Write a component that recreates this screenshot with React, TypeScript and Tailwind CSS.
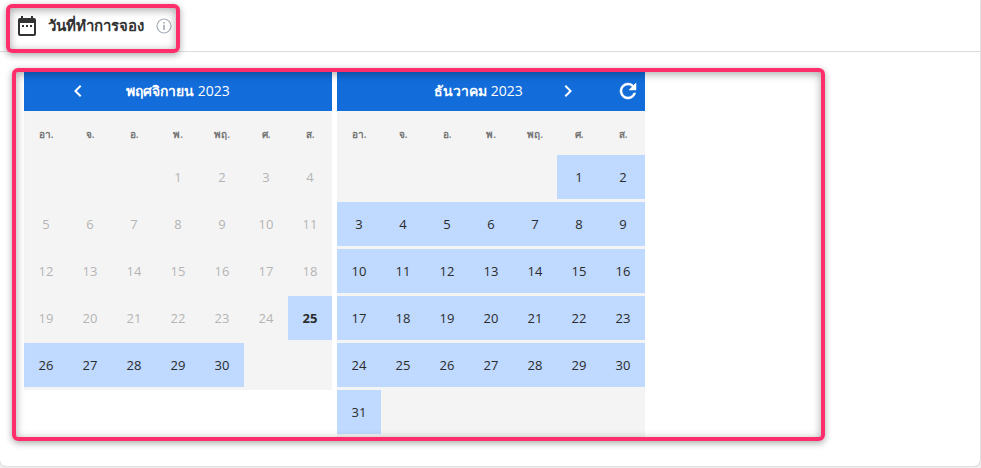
import { MdChevronLeft, MdChevronRight } from 'react-icons/md'

const WEEKDAYS = ['อา.', 'จ.', 'อ.', 'พ.', 'พฤ.', 'ศ.', 'ส.']

const TODAY = 25

// split a month into rows of seven, null for the blank cells
function getWeeks(firstWeekday: number, dayCount: number) {
  const cells: (number | null)[] = Array(firstWeekday).fill(null)
  for (let day = 1; day <= dayCount; day++) cells.push(day)
  while (cells.length % 7 !== 0) cells.push(null)

  const weeks: (number | null)[][] = []
  for (let i = 0; i < cells.length; i += 7) weeks.push(cells.slice(i, i + 7))
  return weeks
}

function Highlight({ className }: { className: string }) {
  return (
    <div
      className={`pointer-events-none absolute rounded-md border-4 border-[#fd2e6b] shadow-[0_2px_7px_rgba(0,0,0,0.35),inset_0_2px_8px_rgba(0,0,0,0.35)] ${className}`}
    />
  )
}

function MonthTable({
  label,
  firstWeekday,
  dayCount,
  firstOpenDay,
  today,
}: {
  label: string
  firstWeekday: number
  dayCount: number
  firstOpenDay: number
  today?: number
}) {
  return (
    <table
      aria-label={label}
      className="w-full table-fixed border-collapse bg-[#f4f4f4] text-center"
    >
      <thead>
        <tr className="h-11">
          {WEEKDAYS.map((name, i) => (
            <th key={i} className="p-0 pt-0.5 text-[10px] font-semibold text-[#757575]">
              {name}
            </th>
          ))}
        </tr>
      </thead>
      <tbody>
        {getWeeks(firstWeekday, dayCount).map((week, i) => (
          <tr key={i} className="h-[47px]">
            {week.map((day, j) => (
              <td key={j} className="p-0 pb-[3px]">
                {day && (
                  <button
                    type="button"
                    disabled={day < firstOpenDay}
                    className={`block h-11 w-full pt-0.5 ${
                      day < firstOpenDay
                        ? 'text-[#b5b5b5]'
                        : 'bg-[#bfd9ff] text-[#2b2b2b]'
                    } ${day === today ? 'font-bold' : ''}`}
                  >
                    {day}
                  </button>
                )}
              </td>
            ))}
          </tr>
        ))}
      </tbody>
    </table>
  )
}

function CalendarIcon() {
  return (
    <svg viewBox="0 0 18 20" className="h-5 w-[18px] text-[#333]" aria-hidden="true">
      <path
        fill="currentColor"
        fillRule="evenodd"
        d="M3 0h2v2h8V0h2v2h1a2 2 0 0 1 2 2v14a2 2 0 0 1-2 2H2a2 2 0 0 1-2-2V4a2 2 0 0 1 2-2h1zM2 7v11h14V7z"
      />
      <path fill="currentColor" d="M4 9h2v2H4zM8 9h2v2H8zM12 9h2v2h-2z" />
    </svg>
  )
}

function InfoIcon() {
  return (
    <svg viewBox="0 0 16 16" className="size-4 text-[#a9afb9]" aria-hidden="true">
      <circle cx="8" cy="8" r="7" fill="none" stroke="currentColor" strokeWidth="1.2" />
      <path fill="currentColor" d="M7.2 4h1.7v1.6H7.2zM7.2 6.8h1.7V12H7.2z" />
    </svg>
  )
}

function ResetIcon() {
  return (
    <svg viewBox="0 0 24 24" className="size-6" aria-hidden="true">
      <path
        fill="currentColor"
        stroke="currentColor"
        strokeWidth="0.5"
        d="M17.65 6.35A7.96 7.96 0 0 0 12 4a8 8 0 1 0 7.73 10h-2.08A6 6 0 1 1 12 6c1.66 0 3.14.69 4.22 1.78L13 11h7V4z"
      />
    </svg>
  )
}

export default function App() {
  return (
    <div className="bg-[#f0f0f0] pr-px pb-0.5 font-['Open_Sans','Noto_Sans',sans-serif] text-[13px]">
      <section className="rounded-b-md bg-white shadow-[0_0_2px_rgba(0,0,0,0.25)]">
        <header className="flex h-[52px] border-b border-[#dcdcdc] pl-[18px]">
          <div className="relative flex items-center">
            <CalendarIcon />
            <h2 className="ml-3 text-[15px] font-semibold text-[#333]">
              วันที่ทำการจอง
            </h2>
            <button type="button" aria-label="ข้อมูล" className="ml-3">
              <InfoIcon />
            </button>
            <Highlight className="-right-2 -left-3 top-1 -bottom-0.5" />
          </div>
        </header>

        <div className="px-3 pt-4 pb-[25px]">
          <div className="relative max-w-[813px] pt-[3px] pb-1 pl-3">
            <div className="flex items-start gap-[5px]">
              <div className="w-[308px]">
                <div className="flex h-10 items-center bg-[#126cd9] px-[42px] text-white">
                  <button type="button" aria-label="เดือนก่อนหน้า">
                    <MdChevronLeft className="size-6" />
                  </button>
                  <h3 className="mr-6 flex-1 text-center text-sm font-semibold">
                    พฤศจิกายน <span className="font-medium">2023</span>
                  </h3>
                </div>
                <MonthTable
                  label="พฤศจิกายน 2023"
                  firstWeekday={3}
                  dayCount={30}
                  firstOpenDay={TODAY}
                  today={TODAY}
                />
              </div>
              <div className="w-[308px]">
                <div className="flex h-10 items-center bg-[#126cd9] pr-[5px] pl-16 text-white">
                  <h3 className="flex-1 text-center text-sm font-semibold">
                    ธันวาคม <span className="font-medium">2023</span>
                  </h3>
                  <button type="button" aria-label="เดือนถัดไป">
                    <MdChevronRight className="size-6" />
                  </button>
                  <button type="button" aria-label="รีเซ็ต" className="ml-9">
                    <ResetIcon />
                  </button>
                </div>
                <MonthTable
                  label="ธันวาคม 2023"
                  firstWeekday={5}
                  dayCount={31}
                  firstOpenDay={1}
                />
              </div>
            </div>
            <Highlight className="inset-0" />
          </div>
        </div>
      </section>
    </div>
  )
}
